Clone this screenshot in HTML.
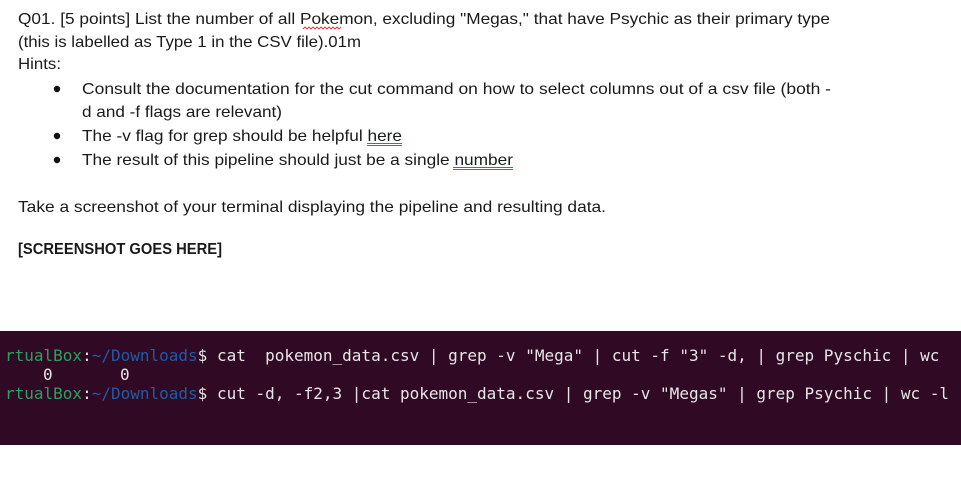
<!DOCTYPE html>
<html><head><meta charset="utf-8"><style>
html,body{margin:0;padding:0;background:#fff;width:961px;height:500px;overflow:hidden}
svg{display:block}
.d{font-family:"Liberation Sans",sans-serif;font-size:16px;fill:#1a1a1a}
.m{font-family:"DejaVu Sans Mono","Liberation Mono",monospace;font-size:16px;fill:#e6e6e6;white-space:pre}
.m text{white-space:pre}
</style></head><body>
<svg width="961" height="500" viewBox="0 0 961 500">
<rect width="961" height="500" fill="#fff"/>
<g class="d">
<text x="18" y="24" textLength="812" lengthAdjust="spacingAndGlyphs">Q01. [5 points] List the number of all Pokemon, excluding "Megas," that have Psychic as their primary type</text>
<text x="18" y="47" textLength="343" lengthAdjust="spacingAndGlyphs">(this is labelled as Type 1 in the CSV file).01m</text>
<text x="18" y="69" textLength="43" lengthAdjust="spacingAndGlyphs">Hints:</text>
<text x="82" y="94" textLength="749" lengthAdjust="spacingAndGlyphs">Consult the documentation for the cut command on how to select columns out of a csv file (both -</text>
<text x="82" y="117" textLength="200" lengthAdjust="spacingAndGlyphs">d and -f flags are relevant)</text>
<text x="82" y="141" textLength="320" lengthAdjust="spacingAndGlyphs">The -v flag for grep should be helpful here</text>
<text x="82" y="165" textLength="431" lengthAdjust="spacingAndGlyphs">The result of this pipeline should just be a single number</text>
<text x="18" y="212" textLength="588" lengthAdjust="spacingAndGlyphs">Take a screenshot of your terminal displaying the pipeline and resulting data.</text>
<text x="18" y="254" textLength="204" lengthAdjust="spacingAndGlyphs" font-weight="bold">[SCREENSHOT GOES HERE]</text>
</g>
<circle cx="57" cy="89" r="3.2" fill="#111"/>
<circle cx="57" cy="136" r="3.2" fill="#111"/>
<circle cx="57" cy="160" r="3.2" fill="#111"/>
<path d="M303 29 l2 -2 l2 2 l2 -2 l2 2 l2 -2 l2 2 l2 -2 l2 2 l2 -2 l2 2 l2 -2 l2 2 l2 -2 l2 2 l2 -2 l2 2 l2 -2 l2 2 l2 -2" stroke="#e03030" fill="none" stroke-width="0.9"/>
<line x1="367" y1="143.5" x2="402" y2="143.5" stroke="#2f6fe0" stroke-width="1"/>
<line x1="367" y1="145.5" x2="402" y2="145.5" stroke="#2f6fe0" stroke-width="1"/>
<line x1="453" y1="167.5" x2="513" y2="167.5" stroke="#2f6fe0" stroke-width="1"/>
<line x1="453" y1="169.5" x2="513" y2="169.5" stroke="#2f6fe0" stroke-width="1"/>
<rect x="0" y="331" width="961" height="114" fill="#300a24"/>
<g class="m">
<text x="5" y="361"><tspan fill="#2aa15c">rtualBox</tspan><tspan fill="#e6e6e6">:</tspan><tspan fill="#1f5aa6">~/Downloads</tspan><tspan>$ cat  pokemon_data.csv | grep -v "Mega" | cut -f "3" -d, | grep Pyschic | wc</tspan></text>
<text x="43" y="380">0</text>
<text x="120" y="380">0</text>
<text x="5" y="399"><tspan fill="#2aa15c">rtualBox</tspan><tspan fill="#e6e6e6">:</tspan><tspan fill="#1f5aa6">~/Downloads</tspan><tspan>$ cut -d, -f2,3 |cat pokemon_data.csv | grep -v "Megas" | grep Psychic | wc -l</tspan></text>
</g>
</svg>
</body></html>
